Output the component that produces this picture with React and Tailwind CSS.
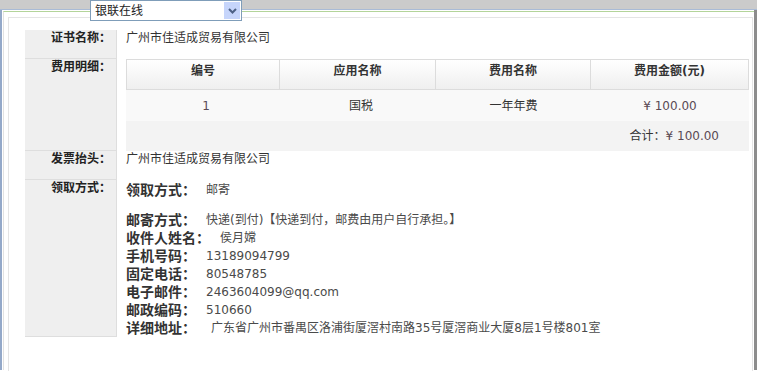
import React from "react";

// label column cell + value cell for the certificate detail form
const Row = ({ label, children }) => (
  <div className="flex">
    <div className="w-[92px] shrink-0 bg-[#efefef] border-r border-b border-[#dedede] pr-[5px] text-right font-bold text-[12px] leading-[16px] text-[#222]">
      {label}
    </div>
    <div className="flex-1 pl-[9px]">{children}</div>
  </div>
);

const fees = [{ no: "1", app: "国税", name: "一年年费", amount: "¥ 100.00" }];

const Info = ({ label, value, gap = "ml-[10px]" }) => (
  <div className="flex items-center h-[18px]">
    <span className="font-bold text-[14px] text-[#333]">{label}</span>
    <span className={gap + " text-[12px] text-[#4a4a4a]"}>{value}</span>
  </div>
);

const App = () => {
  return (
    <div
      className="relative w-[757px] h-[371px] overflow-hidden bg-white"
      style={{ fontFamily: '"DejaVu Sans", "Noto Sans CJK SC", sans-serif' }}
    >
      {/* window top band */}
      <div className="h-[10px] bg-[#cbcbcb] border-b border-[#a9bbd6]"></div>

      {/* payment select lies over the band */}
      <div className="absolute left-[90px] top-0 w-[152px] h-[21px] border border-[#7f9db9] bg-white flex items-center">
        <span className="pl-[4px] text-[12px] text-[#222] flex-1">银联在线</span>
        <div className="w-[16px] h-[17px] mr-[1px] bg-[#c6d5fb] flex items-center justify-center">
          <svg width="9" height="6" viewBox="0 0 9 6">
            <path d="M1 1 L4.5 4.5 L8 1" stroke="#4d6185" strokeWidth="2" fill="none" />
          </svg>
        </div>
      </div>

      <div className="h-[360px] border-l-2 border-[#94a9c9] border-r-[3px] border-r-[#8c8c8c]">
        <div className="pt-[1px] ml-[1px] h-full">
          <div className="border-t border-l border-t-[#b3d49a] border-l-[#e2e2e2] h-full">
            <div className="ml-[4px] mr-[1px] mt-[5px] h-[400px] border border-[#e4e4e4] pl-[16px] pt-[12px]">
              <div className="w-[724px]">
                <Row label="证书名称：">
                  <div className="h-[29px] text-[12px] leading-[16px] text-[#333]">
                    广州市佳适成贸易有限公司
                  </div>
                </Row>
                <Row label="费用明细：">
                  <div className="text-[12px] text-[#333]">
                    <div className="flex h-[31px] border border-[#dcdcdc] bg-gradient-to-b from-white to-[#efefef] font-bold">
                      <div className="w-[153px] pt-[3px] text-center leading-[16px] border-r border-[#dcdcdc]">编号</div>
                      <div className="w-[156px] pt-[3px] text-center leading-[16px] border-r border-[#dcdcdc]">应用名称</div>
                      <div className="w-[155px] pt-[3px] text-center leading-[16px] border-r border-[#dcdcdc]">费用名称</div>
                      <div className="flex-1 pt-[3px] text-center leading-[16px]">费用金额(元)</div>
                    </div>
                    {fees.map((f, i) => (
                      <div key={i} className="flex h-[31px] items-center bg-[#f9f9f9]">
                        <div className="w-[160px] text-center text-[#5a4a55]">{f.no}</div>
                        <div className="w-[150px] text-center">{f.app}</div>
                        <div className="w-[155px] text-center">{f.name}</div>
                        <div className="flex-1 text-center text-[#5a4a55]">{f.amount}</div>
                      </div>
                    ))}
                    <div className="flex h-[30px] items-center justify-end pr-[30px] bg-[#f3f3f3]">
                      合计：<span className="text-[#5a4a55]">¥ 100.00</span>
                    </div>
                  </div>
                </Row>
                <Row label="发票抬头：">
                  <div className="h-[29px] text-[12px] leading-[16px] text-[#333]">
                    广州市佳适成贸易有限公司
                  </div>
                </Row>
                <Row label="领取方式：">
                  <div className="h-[157px] pt-[1px]">
                    <Info label="领取方式：" value="邮寄" />
                    <div className="h-[12px]"></div>
                    <Info label="邮寄方式：" value="快递(到付)【快递到付，邮费由用户自行承担。】" />
                    <Info label="收件人姓名：" value="侯月嫦" />
                    <Info label="手机号码：" value="13189094799" />
                    <Info label="固定电话：" value="80548785" />
                    <Info label="电子邮件：" value="2463604099@qq.com" />
                    <Info label="邮政编码：" value="510660" />
                    <Info label="详细地址：" value="广东省广州市番禺区洛浦街厦滘村南路35号厦滘商业大厦8层1号楼801室" gap="ml-[15px]" />
                  </div>
                </Row>
              </div>
            </div>
          </div>
        </div>
      </div>
    </div>
  );
};

export default App;
